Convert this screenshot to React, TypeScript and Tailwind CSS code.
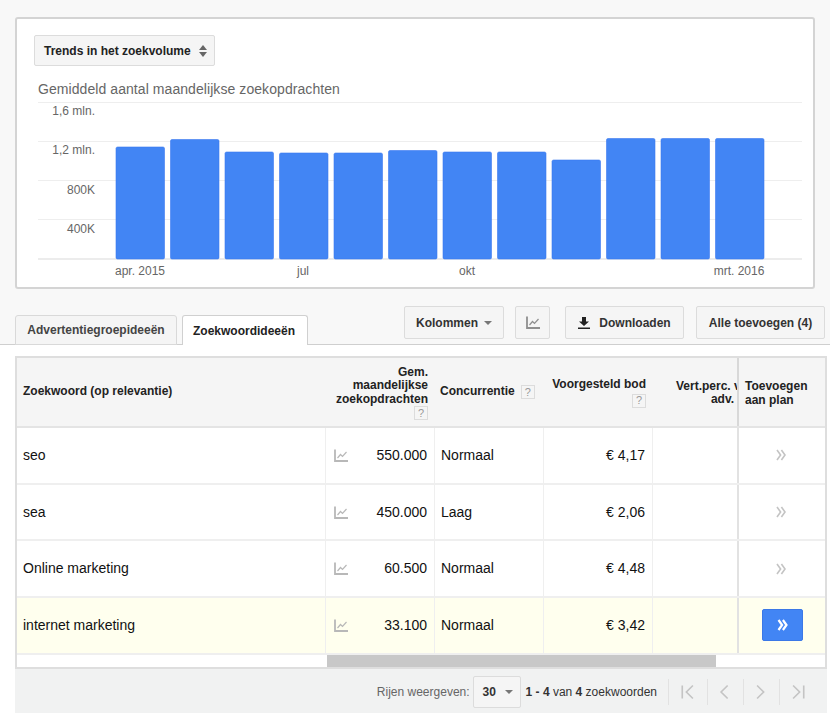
import type { ReactNode } from "react";

// monthly volume bars: top edge y inside the chart svg
const BARS = [147, 139.5, 152, 153, 153, 150.5, 152, 152, 160, 138.5, 138.5, 138.5];

const ROWS = [
  { keyword: "seo", volume: "550.000", level: "Normaal", bid: "€ 4,17" },
  { keyword: "sea", volume: "450.000", level: "Laag", bid: "€ 2,06" },
  { keyword: "Online marketing", volume: "60.500", level: "Normaal", bid: "€ 4,48" },
  { keyword: "internet marketing", volume: "33.100", level: "Normaal", bid: "€ 3,42", active: true },
];

function ChartIcon({ className }: { className: string }) {
  return (
    <svg viewBox="0 0 14 13" className={className} fill="none" stroke="currentColor">
      <path d="M1 0.5V12H14" strokeWidth="1.8" />
      <path d="M3.5 9L6.5 5.5L8.5 7.5L12.5 3" strokeWidth="1.2" />
    </svg>
  );
}

function Chevrons({ className, weight }: { className: string; weight: string }) {
  return (
    <svg viewBox="0 0 10 12" className={className} fill="none" stroke="currentColor" strokeWidth={weight}>
      <path d="M1 1L4.6 6L1 11" />
      <path d="M5.4 1L9 6L5.4 11" />
    </svg>
  );
}

function Help() {
  return (
    <span className="inline-flex h-[14px] w-[14px] items-center justify-center border border-[#dcdcdc] bg-[#f5f5f5] text-[11px] font-normal leading-none text-[#999]">
      ?
    </span>
  );
}

function ToolButton({ className, children }: { className: string; children: ReactNode }) {
  return (
    <div
      className={`flex h-[33px] items-center justify-center rounded-[2px] border border-[#dcdcdc] bg-[#f5f5f5] text-[12px] font-bold text-[#333] ${className}`}
    >
      {children}
    </div>
  );
}

function TrendCard() {
  const gridY = [102.5, 141.5, 180.5, 219.5];
  return (
    <div className="mx-[15px] h-[272px] rounded-[3px] border-2 border-[#d4d4d4] bg-white pl-[17px] pt-[16px]">
      <div className="flex h-[31px] w-[181px] items-center rounded-[2px] border border-[#dcdcdc] bg-[#f5f5f5] pl-[9px] text-[12px] font-bold text-[#222]">
        Trends in het zoekvolume
        <svg viewBox="0 0 8 12" className="ml-[8px] h-[12px] w-[8px] fill-[#666]">
          <path d="M4 0L8 5H0Z" />
          <path d="M4 12L0 7H8Z" />
        </svg>
      </div>
      <div className="ml-[4px] mt-[15px] text-[14px] leading-[17px] tracking-[0.07px] text-[#666]">
        Gemiddeld aantal maandelijkse zoekopdrachten
      </div>
      {/* chart svg covers page x 32..812, y 100..280 */}
      <svg width="780" height="180" viewBox="32 100 780 180" className="-ml-[2px] mt-[2px] block" fontFamily="Liberation Sans, Arial, sans-serif">
        {gridY.map((y) => (
          <line key={y} x1="38" x2="802" y1={y} y2={y} stroke="#eeeeee" />
        ))}
        <line x1="38" x2="802" y1="259" y2="259" stroke="#e6e6e6" strokeWidth="1.5" />
        {BARS.map((top, i) => (
          <rect
            key={i}
            x={116 + i * 54.5}
            y={top}
            width="48.5"
            height={259 - top}
            rx="1.5"
            fill="#4285f4"
            stroke="#3b78f0"
            strokeWidth="0.6"
          />
        ))}
        <g fontSize="12" fill="#666" textAnchor="end">
          <text x="95" y="115">1,6 mln.</text>
          <text x="95" y="154">1,2 mln.</text>
          <text x="95" y="194">800K</text>
          <text x="95" y="233">400K</text>
        </g>
        <g fontSize="12" fill="#666" textAnchor="middle">
          <text x="140" y="275">apr. 2015</text>
          <text x="303" y="275">jul</text>
          <text x="467" y="275">okt</text>
          <text x="739" y="275">mrt. 2016</text>
        </g>
      </svg>
    </div>
  );
}

function Toolbar() {
  return (
    <div className="relative flex h-[56px] items-end border-b border-[#cfcfcf] pl-[15px]">
      <div className="-mb-px flex h-[30px] w-[162px] items-center justify-center rounded-t-[3px] border border-[#d9d9d9] bg-[#f5f5f5] text-[12px] font-bold text-[#444]">
        Advertentiegroepideeën
      </div>
      <div className="-mb-px ml-[5px] flex h-[30px] w-[126px] items-center justify-center rounded-t-[3px] border border-b-0 border-[#d0d0d0] bg-white pr-[2px] text-[12px] font-bold text-[#222]">
        Zoekwoordideeën
      </div>
      <div className="mb-[5px] ml-[96px] flex">
        <ToolButton className="w-[100px]">
          Kolommen
          <svg viewBox="0 0 8 4" className="ml-[6px] h-[4px] w-[8px] fill-[#777]">
            <path d="M0 0H8L4 4Z" />
          </svg>
        </ToolButton>
        <ToolButton className="ml-[11px] w-[35px]">
          <ChartIcon className="h-[13px] w-[14px] text-[#8f8f8f]" />
        </ToolButton>
        <ToolButton className="ml-[15px] w-[119px]">
          <svg viewBox="0 0 12 12" className="mr-[9px] h-[12px] w-[12px] fill-[#222]">
            <path d="M4 0H8V4.5H11L6 9L1 4.5H4Z" />
            <path d="M0 10.5H12V12H0Z" />
          </svg>
          Downloaden
        </ToolButton>
        <ToolButton className="ml-[12px] w-[129px]">Alle toevoegen (4)</ToolButton>
      </div>
    </div>
  );
}

function KeywordTable() {
  return (
    <div className="ml-[15px] mr-[3px] mt-[11px] border-2 border-[#dedede] bg-white">
      <div className="flex h-[70px] border-b-2 border-[#e4e4e4] bg-[#f5f5f5] text-[12px] font-bold leading-[13.5px] text-[#222]">
        <div className="flex w-[308px] items-center pl-[6px]">Zoekwoord (op relevantie)</div>
        <div className="flex w-[109px] flex-col items-end justify-center pr-[6px] pt-[2px] text-right">
          Gem.
          <br />
          maandelijkse
          <br />
          zoekopdrachten
          <Help />
        </div>
        <div className="flex w-[109px] items-center pl-[6px]">
          Concurrentie
          <span className="ml-[6px] flex">
            <Help />
          </span>
        </div>
        <div className="flex w-[109px] flex-col items-end justify-center pr-[6px] pt-[2px] text-right">
          Voorgesteld bod
          <span className="mt-[2px] flex">
            <Help />
          </span>
        </div>
        <div className="flex w-[85px] flex-col justify-center overflow-hidden pt-[2px]">
          <div className="whitespace-nowrap pl-[24px]">Vert.perc. van</div>
          <div className="pr-[3px] text-right">adv.</div>
        </div>
        <div className="flex flex-1 items-center border-l-2 border-[#d8d8d8] pl-[6px] pt-[2px] leading-[14px]">
          Toevoegen
          <br />
          aan plan
        </div>
      </div>
      {ROWS.map((row) => (
        <div
          key={row.keyword}
          className={`flex h-[56.7px] border-b-2 border-[#efefef] text-[14px] text-[#111] ${row.active ? "bg-[#ffffee]" : ""}`}
        >
          <div className="flex w-[308px] items-center pl-[6px]">{row.keyword}</div>
          <div className="flex w-[109px] items-center justify-between border-l border-[#efefef] pl-[8px] pr-[7px]">
            <ChartIcon className="h-[13px] w-[14px] text-[#b8b8b8]" />
            {row.volume}
          </div>
          <div className="flex w-[109px] items-center border-l border-[#efefef] pl-[6px]">{row.level}</div>
          <div className="flex w-[109px] items-center justify-end border-l border-[#efefef] pr-[7px]">{row.bid}</div>
          <div className="w-[85px] border-l border-[#efefef]" />
          <div className="flex flex-1 items-center justify-center border-l-2 border-[#e2e2e2]">
            {row.active ? (
              <div className="flex h-[32px] w-[41px] items-center justify-center rounded-[2px] border border-[#3b78e7] bg-[#4285f4]">
                <Chevrons className="h-[12px] w-[11px] text-white" weight="2.2" />
              </div>
            ) : (
              <Chevrons className="mr-[2px] h-[12px] w-[10px] text-[#c4c4c4]" weight="1.6" />
            )}
          </div>
        </div>
      ))}
      <div className="h-[12px] pl-[310px]">
        <div className="h-[12px] w-[389px] bg-[#c8c8c8]" />
      </div>
    </div>
  );
}

function Pager() {
  const icons = [
    { d: "M2 3V19 M15 3L7 11L15 19", width: "w-[39px]" },
    { d: "M11 3L3 11L11 19", width: "w-[36px]" },
    { d: "M3 3L11 11L3 19", width: "w-[36px]" },
    { d: "M3 3L11 11L3 19 M16 3V19", width: "w-[36px]" },
  ];
  return (
    <div className="ml-[15px] mr-[3px] flex h-[46px] items-center justify-end bg-[#f1f2f2] text-[12px] text-[#666]">
      <span>Rijen weergeven:</span>
      <div className="ml-[3px] flex h-[32px] w-[48px] items-center rounded-[2px] border border-[#dcdcdc] bg-[#f5f5f5] pl-[9px] font-bold text-[#333]">
        30
        <svg viewBox="0 0 8 4" className="ml-[9px] h-[4px] w-[8px] fill-[#777]">
          <path d="M0 0H8L4 4Z" />
        </svg>
      </div>
      <span className="ml-[5px] text-[#333]">
        <b>1 - 4</b> van <b>4</b> zoekwoorden
      </span>
      <div className="ml-[11px] mr-[12px] flex">
        {icons.map((icon) => (
          <div key={icon.d} className={`flex h-[26px] items-center justify-center border-l border-[#e2e2e2] ${icon.width}`}>
            <svg viewBox="0 0 18 22" className="h-[18px] w-[16px]" fill="none" stroke="#c4c4c4" strokeWidth="2">
              <path d={icon.d} />
            </svg>
          </div>
        ))}
      </div>
    </div>
  );
}

export default function App() {
  return (
    <div className="h-[713px] w-[830px] overflow-hidden bg-white font-['Liberation_Sans',Arial,sans-serif]">
      <div className="bg-[#f8f8f8] pt-[17px]">
        <TrendCard />
        <Toolbar />
      </div>
      <KeywordTable />
      <Pager />
    </div>
  );
}
